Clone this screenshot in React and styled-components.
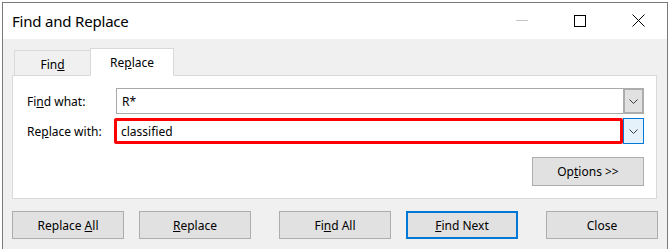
import styled, { createGlobalStyle } from "styled-components";

const Global = createGlobalStyle`
  html, body {
    margin: 0;
    padding: 0;
    background: #ffffff;
    overflow: hidden;
  }
  body {
    font-family: "Noto Sans", "Open Sans", sans-serif;
    font-size: 12px;
    color: #000;
  }
`;

const Window = styled.div`
  margin: 2px 0 0 2px;
  width: 664px;
  height: 246px;
  border: 1px solid #7a7a7a;
  border-bottom: none;
  display: flex;
  flex-direction: column;
  background: #f0f0f0;
  overflow: hidden;
`;

const TitleBar = styled.div`
  height: 36px;
  background: #fff;
  display: flex;
  align-items: center;
  flex-shrink: 0;
`;

const Title = styled.div`
  flex: 1;
  padding-left: 9px;
  font-size: 15px;
  letter-spacing: -0.2px;
  color: #000;
  padding-bottom: 1px;
`;

const CaptionButton = styled.div`
  width: 58px;
  height: 36px;
  display: flex;
  align-items: center;
  justify-content: center;
  padding-bottom: 1px;
  box-sizing: border-box;
`;

const Body = styled.div`
  flex: 1;
  padding: 9px 10px 0 9px;
`;

const TabStrip = styled.div`
  display: flex;
  align-items: flex-end;
  padding-left: 2px;
  height: 27px;
`;

const Tab = styled.div`
  box-sizing: border-box;
  display: flex;
  align-items: center;
  justify-content: center;
  width: ${(p) => (p.$active ? "84px" : "77px")};
  height: ${(p) => (p.$active ? "28px" : "26px")};
  margin-bottom: -1px;
  background: ${(p) => (p.$active ? "#fff" : "#f0f0f0")};
  border: 1px solid #d9d9d9;
  border-bottom-color: ${(p) => (p.$active ? "#fff" : "#d9d9d9")};
  margin-left: ${(p) => (p.$active ? "-1px" : "0")};
  position: relative;
  z-index: ${(p) => (p.$active ? 2 : 1)};
  padding-top: ${(p) => (p.$active ? "0" : "2px")};
`;

const Panel = styled.div`
  box-sizing: border-box;
  width: 645px;
  height: 124px;
  background: #fff;
  border: 1px solid #d9d9d9;
  padding: 12px 12px 0 14px;
  display: flex;
  flex-direction: column;
`;

const Row = styled.div`
  display: flex;
  align-items: center;
  height: 26px;
  margin-top: ${(p) => p.$mt || 0}px;
`;

const Label = styled.div`
  width: ${(p) => p.$w || 89}px;
  flex-shrink: 0;
`;

const Combo = styled.div`
  flex: 1;
  display: flex;
  height: 26px;
  box-sizing: border-box;
`;

const Field = styled.div`
  flex: 1;
  box-sizing: border-box;
  display: flex;
  align-items: center;
  border: ${(p) => (p.$marked ? "3px solid #ff0000" : "1px solid #a9a9a9")};
  border-right: ${(p) => (p.$marked ? "3px solid #ff0000" : "none")};
  border-radius: ${(p) => (p.$marked ? "2px" : "0")};
  padding-left: ${(p) => (p.$marked ? "4px" : "5px")};
  font-size: 12px;
`;

const DropButton = styled.div`
  width: 21px;
  box-sizing: border-box;
  display: flex;
  align-items: center;
  justify-content: center;
  background: ${(p) => (p.$focus ? "#e5f1fb" : "#e1e1e1")};
  border: ${(p) => (p.$focus ? "1px solid #0078d7" : "2px solid #adadad")};
`;

const OptionsRow = styled.div`
  display: flex;
  justify-content: flex-end;
  margin-top: 13px;
`;

const Button = styled.div`
  box-sizing: border-box;
  width: 112px;
  height: ${(p) => p.$h || 28}px;
  display: flex;
  align-items: center;
  justify-content: center;
  background: #e1e1e1;
  border: ${(p) => (p.$default ? "2px solid #0078d7" : "1px solid #adadad")};
  margin-left: ${(p) => p.$ml || 0}px;
  flex-shrink: 0;
`;

const ButtonRow = styled.div`
  display: flex;
  margin-top: 12px;
`;

const Chevron = () => (
  <svg width="9" height="5" viewBox="0 0 9 5">
    <path d="M0.5 0.5 L4.5 4.5 L8.5 0.5" fill="none" stroke="#3c3c3c" strokeWidth="1" />
  </svg>
);

export default function App() {
  return (
    <>
      <Global />
      <Window>
        <TitleBar>
          <Title>Find and Replace</Title>
          <CaptionButton>
            <svg width="12" height="2" viewBox="0 0 12 2">
              <rect x="0" y="0" width="12" height="1" fill="#c4c4c4" />
            </svg>
          </CaptionButton>
          <CaptionButton>
            <svg width="12" height="12" viewBox="0 0 12 12">
              <rect x="0.5" y="0.5" width="11" height="11" fill="none" stroke="#000" />
            </svg>
          </CaptionButton>
          <CaptionButton>
            <svg width="13" height="13" viewBox="0 0 13 13">
              <path d="M0.5 0.5 L12.5 12.5 M12.5 0.5 L0.5 12.5" stroke="#000" strokeWidth="1" />
            </svg>
          </CaptionButton>
        </TitleBar>
        <Body>
          <TabStrip>
            <Tab>
              <span>
                Fin<u>d</u>
              </span>
            </Tab>
            <Tab $active>
              <span>
                Re<u>p</u>lace
              </span>
            </Tab>
          </TabStrip>
          <Panel>
            <Row>
              <Label>
                Fi<u>n</u>d what:
              </Label>
              <Combo>
                <Field>R*</Field>
                <DropButton>
                  <Chevron />
                </DropButton>
              </Combo>
            </Row>
            <Row $mt={4}>
              <Label $w={87}>
                Re<u>p</u>lace with:
              </Label>
              <Combo>
                <Field $marked>classified</Field>
                <DropButton $focus>
                  <Chevron />
                </DropButton>
              </Combo>
            </Row>
            <OptionsRow>
              <Button $h={29}>
                <span>
                  Op<u>t</u>ions &gt;&gt;
                </span>
              </Button>
            </OptionsRow>
          </Panel>
          <ButtonRow>
            <Button>
              <span>
                Replace <u>A</u>ll
              </span>
            </Button>
            <Button $ml={15}>
              <span>
                <u>R</u>eplace
              </span>
            </Button>
            <Button $ml={28}>
              <span>
                Fi<u>n</u>d All
              </span>
            </Button>
            <Button $ml={15} $default>
              <span>
                <u>F</u>ind Next
              </span>
            </Button>
            <Button $ml={28}>
              <span>Close</span>
            </Button>
          </ButtonRow>
        </Body>
      </Window>
    </>
  );
}
